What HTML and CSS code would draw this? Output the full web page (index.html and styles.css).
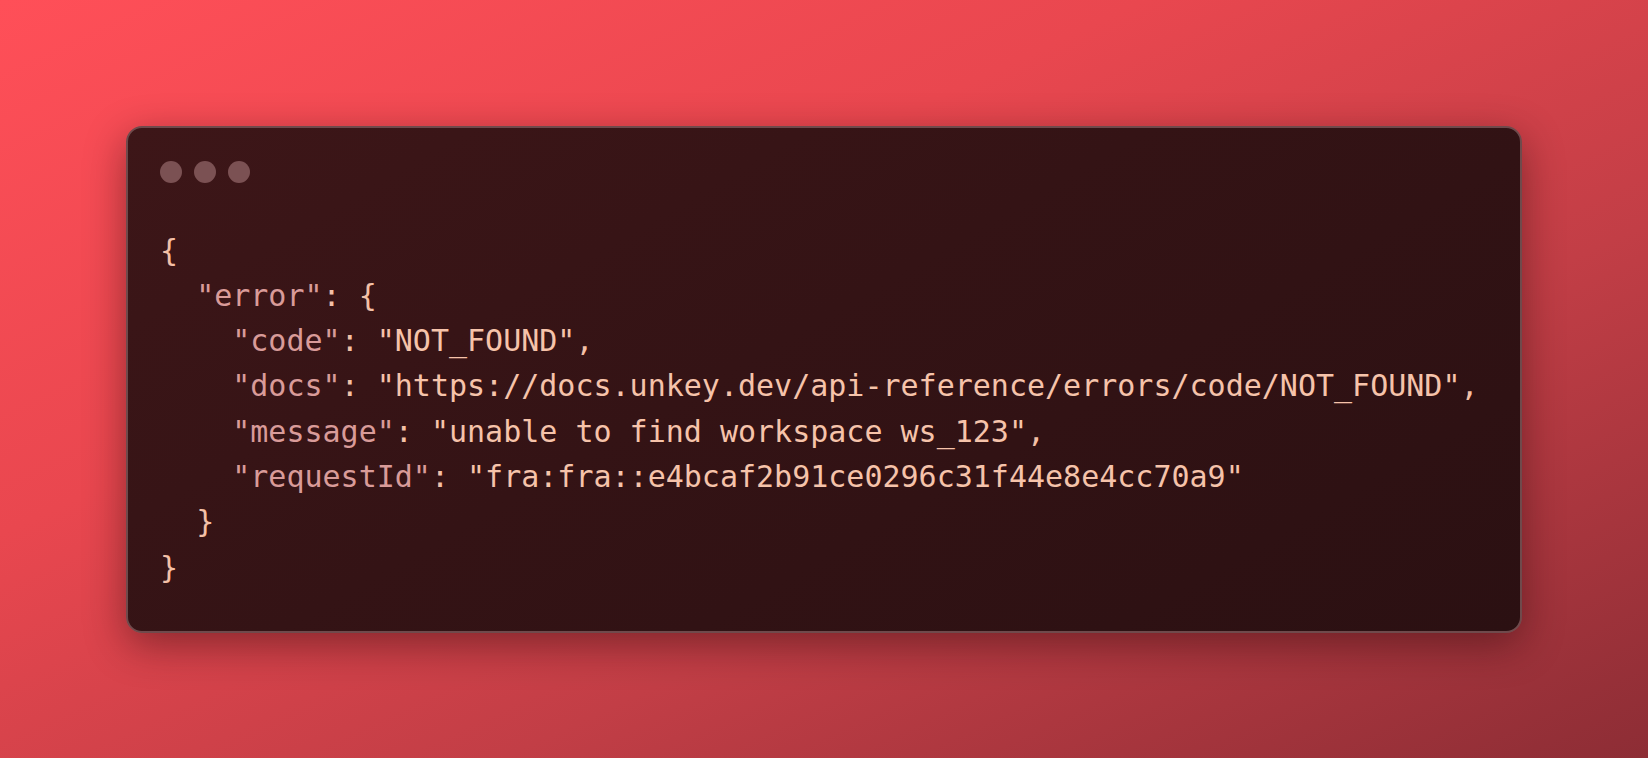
FILE: index.html
```html
<!DOCTYPE html>
<html lang="en">
<head>
<meta charset="utf-8">
<title>Error response</title>
<link rel="stylesheet" href="styles.css">
</head>
<body>
<main class="stage">
  <section class="window">
    <div class="dots">
      <span class="dot"></span>
      <span class="dot"></span>
      <span class="dot"></span>
    </div>
    <pre class="code"><span class="p">{</span>
  <span class="k">"error"</span><span class="p">: {</span>
    <span class="k">"code"</span><span class="p">: </span><span class="v">"NOT_FOUND"</span><span class="p">,</span>
    <span class="k">"docs"</span><span class="p">: </span><span class="v">"https://docs.unkey.dev/api-reference/errors/code/NOT_FOUND"</span><span class="p">,</span>
    <span class="k">"message"</span><span class="p">: </span><span class="v">"unable to find workspace ws_123"</span><span class="p">,</span>
    <span class="k">"requestId"</span><span class="p">: </span><span class="v">"fra:fra::e4bcaf2b91ce0296c31f44e8e4cc70a9"</span>
  <span class="p">}</span>
<span class="p">}</span></pre>
  </section>
</main>
</body>
</html>
```

FILE: styles.css
```css
html, body {
  margin: 0;
  padding: 0;
  height: 100%;
}

body {
  background: linear-gradient(155deg, #ff4f58 0%, #e9474f 35%, #c23e46 65%, #8d2d35 100%);
  overflow: hidden;
}

.stage {
  height: 100vh;
  display: flex;
  align-items: center;
  justify-content: center;
}

.window {
  box-sizing: border-box;
  width: 1396px;
  height: 507px;
  border: 2px solid #6f4a4c;
  border-radius: 16px;
  background: linear-gradient(150deg, #3d1618 0%, #341315 45%, #2b1012 100%);
  box-shadow: 0 12px 40px rgba(40, 8, 10, 0.45);
  padding: 33px 32px 0 32px;
}

.dots {
  display: flex;
  gap: 12px;
  height: 23px;
}

.dot {
  width: 22px;
  height: 22px;
  border-radius: 50%;
  background: #7b5153;
}

.code {
  margin: 44px 0 0 0;
  font-family: "DejaVu Sans Mono", "Liberation Mono", monospace;
  font-size: 30px;
  line-height: 45.3px;
  color: #f4c0a7;
  white-space: pre;
}

.k {
  color: #d99b99;
}

.v {
  color: #f6c3aa;
}

.p {
  color: #f4c0a7;
}
```
